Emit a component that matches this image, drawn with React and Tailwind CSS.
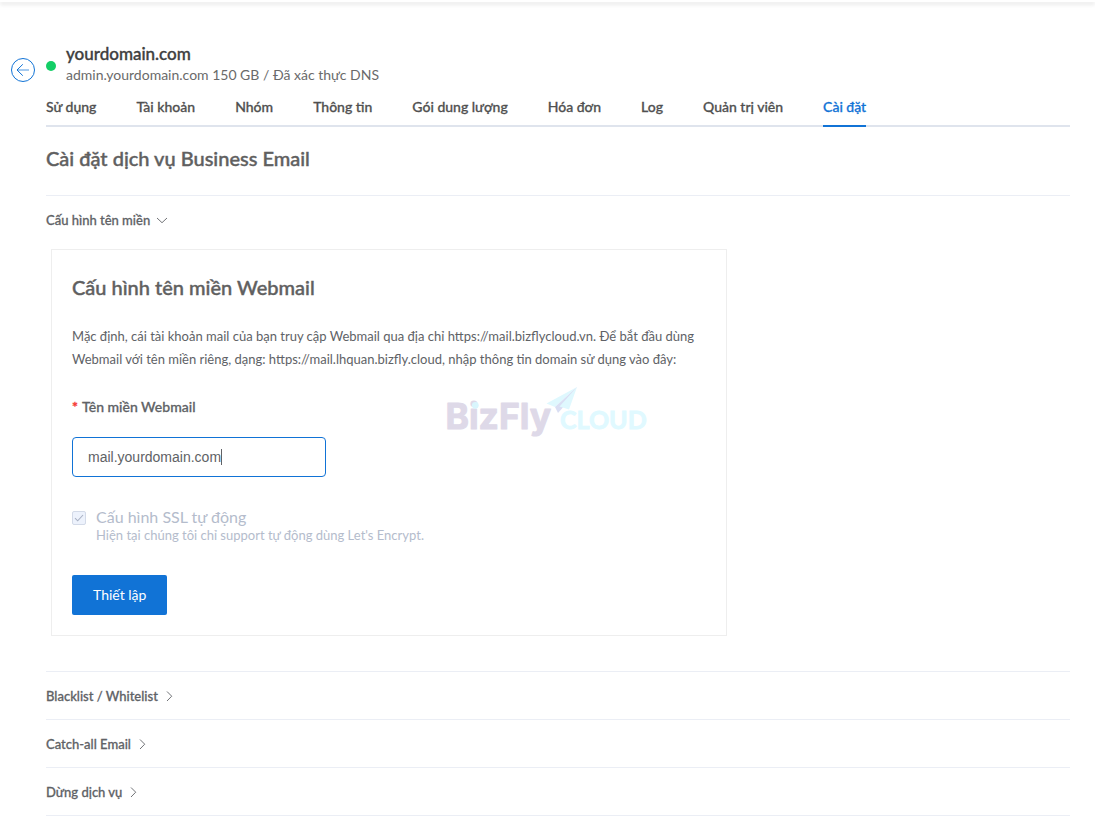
import { useState } from "react";

const tabs = [
  "Sử dụng",
  "Tài khoản",
  "Nhóm",
  "Thông tin",
  "Gói dung lượng",
  "Hóa đơn",
  "Log",
  "Quản trị viên",
  "Cài đặt",
];

const closedSections = ["Blacklist / Whitelist", "Catch-all Email", "Dừng dịch vụ"];

const savedDomain = "mail.yourdomain.com";

function BackIcon() {
  return (
    <svg width="24" height="24" viewBox="0 0 24 24" fill="none" stroke="#1173d6" aria-hidden="true">
      <circle cx="12" cy="12" r="11.5" />
      <path d="M11.8 6.300 6 12l5.800 5.700" />
      <path d="M6.500 12H18" opacity=".75" />
    </svg>
  );
}

function Chevron({ open }) {
  return (
    <svg
      width="12"
      height="12"
      viewBox="0 0 12 12"
      fill="none"
      stroke="#606266"
      strokeWidth="0.9"
      aria-hidden="true"
    >
      <path d={open ? "M1 3 6 7.700 11 3" : "M3 .5 7.700 5.200 3 10"} />
    </svg>
  );
}

function SectionHeader({ title, open, onClick }) {
  return (
    <button
      type="button"
      aria-expanded={open}
      onClick={onClick}
      className="flex h-[47px] w-full items-center gap-1.5 pt-0.5 text-left text-[13px] font-medium text-[#606266] [-webkit-text-stroke:thin]"
    >
      {title}
      <Chevron open={open} />
    </button>
  );
}

function Watermark() {
  return (
    <svg
      className="pointer-events-none absolute top-[137px] left-[394px]"
      width="206"
      height="56"
      viewBox="0 0 206 56"
      aria-hidden="true"
    >
      <text
        x="-0.5"
        y="42"
        fontFamily="Inter, sans-serif"
        fontWeight="700"
        fontSize="35.5"
        fill="#ded9e8"
        stroke="#ded9e8"
        strokeWidth="1"
        strokeLinejoin="round"
      >
        BizFly
      </text>
      <circle cx="29.300" cy="18.300" r="3.400" fill="#d9f6fd" />
      <path d="M131 0 100.500 16.500 109 20Z" fill="#dff8fe" />
      <path d="M131 0 109 20 112 26 116 21.500Z" fill="#d9def3" />
      <path d="M131 0 113.500 19.500 123 22.500Z" fill="#dff8fe" />
      <text
        x="114"
        y="42"
        fontFamily="Lato, sans-serif"
        fontWeight="700"
        fontSize="25"
        fill="#e0f9ff"
        stroke="#e0f9ff"
        strokeWidth="0.8"
      >
        CLOUD
      </text>
    </svg>
  );
}

export default function App() {
  const [open, setOpen] = useState(true);
  const [domain, setDomain] = useState(savedDomain);

  return (
    <div className="min-h-screen bg-white font-['Lato',sans-serif] text-[#606266]">
      <div className="h-0.5 bg-white shadow-[0_2px_4px_rgba(0,0,0,0.16)]" />

      <header className="flex pt-[42px] pl-[11px]">
        <a href="#back" aria-label="Quay lại" className="mt-3.5 mr-[11px] block">
          <BackIcon />
        </a>
        <span className="mt-[17px] mr-2.5 size-2.5 rounded-full bg-[#13ce66]" />
        <div>
          <h1 className="font-['Lato',sans-serif] text-[17px] leading-5 font-medium text-[#404040] [-webkit-text-stroke:thin]">
            yourdomain.com
          </h1>
          <p className="text-sm leading-[22px] text-[#6a6a6a]">
            admin.yourdomain.com 150 GB / Đã xác thực DNS
          </p>
        </div>
      </header>

      <main className="pr-[25px] pl-[46px]">
        <nav className="mt-1 flex gap-10 border-b-2 border-[#dfe4ed]">
          {tabs.map((tab) => (
            <a
              key={tab}
              href="#tab"
              className={
                tab === "Cài đặt"
                  ? "-mb-0.5 border-b-2 border-[#1173d6] pt-1.5 pb-[7px] text-sm leading-[22px] font-medium whitespace-nowrap text-[#1173d6] [-webkit-text-stroke:thin]"
                  : "pt-1.5 pb-[7px] text-sm leading-[22px] font-medium whitespace-nowrap text-[#505050] [-webkit-text-stroke:thin]"
              }
            >
              {tab}
            </a>
          ))}
        </nav>

        <h2 className="pt-[19px] pb-[25px] text-xl leading-6 font-medium text-[#606060] [-webkit-text-stroke:thin]">
          Cài đặt dịch vụ Business Email
        </h2>

        <section className="border-t border-[#ebeef5]">
          <SectionHeader title="Cấu hình tên miền" open={open} onClick={() => setOpen(!open)} />
          {open && (
            <form
              className="relative mt-1.5 mb-[35px] ml-[5px] max-w-[676px] border border-[#eeeeee] p-5"
              onSubmit={(e) => e.preventDefault()}
            >
              <Watermark />
              <h3 className="pt-[5px] text-xl leading-6 font-medium text-[#606060] [-webkit-text-stroke:thin]">
                Cấu hình tên miền Webmail
              </h3>
              <p className="mt-[26px] text-[13px] leading-[23px]">
                Mặc định, cái tài khoản mail của bạn truy cập Webmail qua địa chỉ
                https://mail.bizflycloud.vn. Để bắt đầu dùng Webmail với tên miền riêng, dạng:
                https://mail.lhquan.bizfly.cloud, nhập thông tin domain sử dụng vào đây:
              </p>
              <label
                htmlFor="domain"
                className="mt-6 flex gap-1 text-sm leading-6 font-medium [-webkit-text-stroke:thin]"
              >
                <span className="font-bold text-[#f5352f]">*</span>
                Tên miền Webmail
              </label>
              <div className="relative mt-[18px] w-[254px]">
                <input
                  id="domain"
                  value={domain}
                  onChange={(e) => setDomain(e.target.value)}
                  className="block h-10 w-full rounded border border-[#1173d6] bg-white px-[15px] font-['Liberation_Sans',sans-serif] text-sm outline-none"
                />
                {domain === savedDomain && (
                  <span className="pointer-events-none absolute top-3 left-[149px] h-4 w-px bg-[#606266]" />
                )}
              </div>
              <label className="mt-[31px] flex text-[#b4bccc]">
                <input type="checkbox" defaultChecked disabled className="sr-only" />
                <span className="mt-[3px] mr-2.5 flex size-3.5 items-center justify-center rounded-xs border border-[#d3dae8] bg-[#edf2fc]">
                  <svg width="10" height="8" viewBox="0 0 10 8" fill="none" stroke="#a9b2c4" aria-hidden="true">
                    <path d="M1 4.200 3.700 6.800 9 1" strokeWidth="1.1" />
                  </svg>
                </span>
                <span>
                  <span className="block text-base leading-[18px]">Cấu hình SSL tự động</span>
                  <span className="block text-[13px] leading-[18px]">
                    Hiện tại chúng tôi chỉ support tự động dùng Let's Encrypt.
                  </span>
                </span>
              </label>
              <button
                type="submit"
                className="mt-[31px] block h-10 rounded-xs bg-[#1173d6] px-[21px] text-sm text-white"
              >
                Thiết lập
              </button>
            </form>
          )}
        </section>

        <div className="border-b border-[#ebeef5]">
          {closedSections.map((title) => (
            <section key={title} className="border-t border-[#ebeef5]">
              <SectionHeader title={title} open={false} />
            </section>
          ))}
        </div>
      </main>
    </div>
  );
}
